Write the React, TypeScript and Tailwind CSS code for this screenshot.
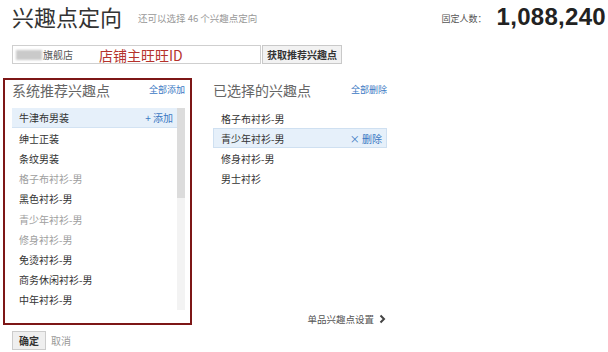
import React from "react";

const font = { fontFamily: '"Noto Sans CJK SC", "Noto Sans", sans-serif' };

const leftItems: { t: string; dim?: boolean }[] = [
  { t: "牛津布男装" },
  { t: "绅士正装" },
  { t: "条纹男装" },
  { t: "格子布衬衫-男", dim: true },
  { t: "黑色衬衫-男" },
  { t: "青少年衬衫-男", dim: true },
  { t: "修身衬衫-男", dim: true },
  { t: "免烫衬衫-男" },
  { t: "商务休闲衬衫-男" },
  { t: "中年衬衫-男" },
];

const rightItems = ["格子布衬衫-男", "青少年衬衫-男", "修身衬衫-男", "男士衬衫"];

export default function App() {
  return (
    <div
      className="w-[608px] h-[352px] bg-white overflow-hidden text-[#333]"
      style={font}
    >
      {/* Header */}
      <div className="h-[45px] flex items-start px-[12px]">
        <div className="pt-[5px] text-[22px] leading-[22px] text-[#333]">兴趣点定向</div>
        <div className="ml-[16px] pt-[12px] text-[9.5px] leading-[12px] text-[#999]">
          还可以选择 46 个兴趣点定向
        </div>
        <div className="ml-auto flex items-start -mr-[10px]">
          <div className="pt-[13px] text-[9px] leading-[12px] text-[#555]">固定人数：</div>
          <div
            className="ml-[10px] pt-[5px] text-[24px] leading-[24px] font-bold text-[#222] tracking-[0.3px]"
            style={{ fontFamily: '"Liberation Sans", Arial, sans-serif' }}
          >
            1,088,240
          </div>
        </div>
      </div>

      {/* Input row */}
      <div className="h-[19px] flex items-stretch pl-[12px]">
        <div className="w-[249px] border border-[#cfcfcf] flex items-center bg-white">
          <div className="ml-[3px] w-[26px] h-[10px] bg-[#cacaca] blur-[1px]" />
          <div className="ml-[1px] text-[10px] text-[#555]">旗舰店</div>
          <div className="ml-[26px] text-[14px] leading-[14px] text-[#b5322c]">店铺主旺旺ID</div>
        </div>
        <div className="ml-[1px] w-[80px] border border-[#c9c9c9] bg-[#f2f2f2] flex items-center justify-center text-[10px] font-bold text-[#333]">
          获取推荐兴趣点
        </div>
      </div>

      {/* Main */}
      <div className="mt-[14px] flex items-start">
        {/* Left box */}
        <div className="ml-[3px] w-[189px] h-[247px] border-2 border-[#7d1717] pl-[7px] pr-[5px]">
          <div className="h-[28px] pb-[8px] flex items-center justify-between">
            <div className="text-[14px] leading-[18px] text-[#666]">系统推荐兴趣点</div>
            <div className="text-[9px] text-[#3a78c3]">全部添加</div>
          </div>
          <div className="flex h-[202px]">
            <div className="flex-1">
              {leftItems.map((it, i) => (
                <div
                  key={i}
                  className={
                    i === 0
                      ? "h-[20.2px] flex items-center justify-between pl-[7px] pr-[4px] bg-[#e6f0fa] border-b border-[#d3e3f3] text-[10px] text-[#333]"
                      : it.dim
                      ? "h-[20.2px] flex items-center pl-[7px] text-[10px] text-[#9e9e9e]"
                      : "h-[20.2px] flex items-center pl-[7px] text-[10px] text-[#333]"
                  }
                >
                  <span>{it.t}</span>
                  {i === 0 && <span className="text-[10px] text-[#3a78c3]">+ 添加</span>}
                </div>
              ))}
            </div>
            <div className="w-[8px] h-full bg-[#f3f3f3] flex flex-col">
              <div className="h-[90px] bg-[#dcdcdc]" />
            </div>
          </div>
        </div>

        {/* Right column */}
        <div className="ml-[21px] w-[174px] h-[247px] pt-[2px] flex flex-col">
          <div className="h-[28px] pb-[8px] flex items-center justify-between">
            <div className="text-[14px] leading-[18px] text-[#666]">已选择的兴趣点</div>
            <div className="text-[9px] text-[#3a78c3]">全部删除</div>
          </div>
          {rightItems.map((t, i) => (
            <div
              key={i}
              className={
                i === 1
                  ? "h-[20px] flex items-center justify-between pl-[7px] pr-[4px] bg-[#e6f0fa] border border-[#cfe0f1] text-[10px] text-[#333]"
                  : "h-[20px] flex items-center pl-[8px] text-[10px] text-[#333]"
              }
            >
              <span>{t}</span>
              {i === 1 && <span className="text-[10px] text-[#3a78c3]">× 删除</span>}
            </div>
          ))}
          <div className="mt-auto h-[12px] flex items-center justify-end pr-[1px]">
            <span className="text-[9.5px] text-[#555]">单品兴趣点设置</span>
            <svg className="ml-[5px]" width="7" height="10" viewBox="0 0 7 10">
              <polyline points="1.5,1.5 5,5 1.5,8.5" fill="none" stroke="#444" strokeWidth="2" />
            </svg>
          </div>
        </div>
      </div>

      {/* Footer */}
      <div className="mt-[6px] pl-[12px] flex items-center">
        <div className="w-[34px] h-[19px] border border-[#cccccc] bg-[#efefef] flex items-center justify-center text-[10px] font-bold text-[#333]">
          确定
        </div>
        <div className="ml-[5px] text-[10px] text-[#999]">取消</div>
      </div>
    </div>
  );
}
